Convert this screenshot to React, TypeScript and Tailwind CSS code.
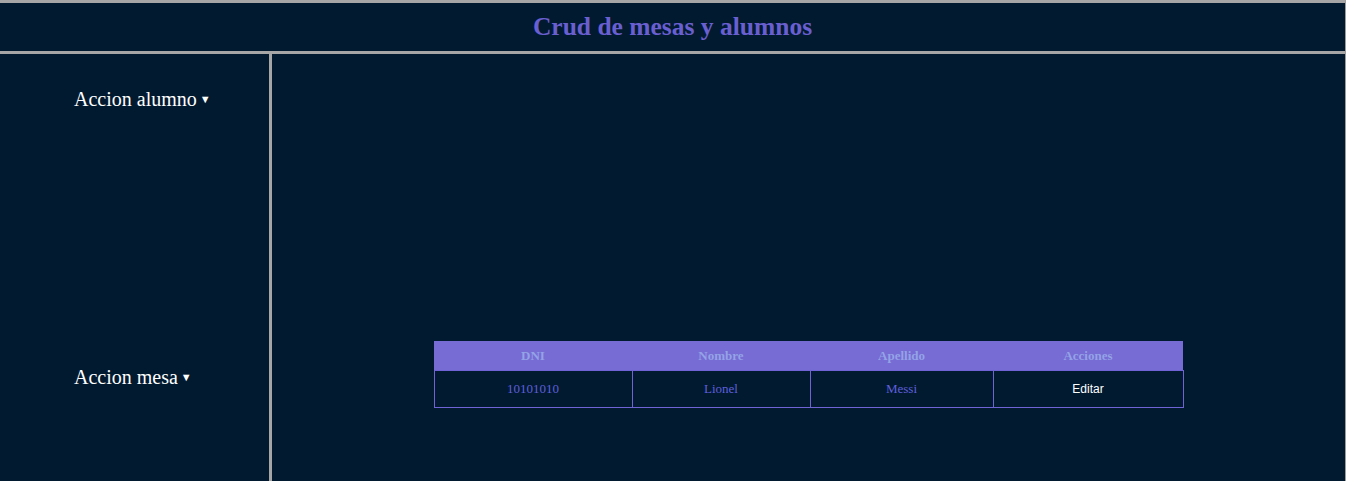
const rows = [{ dni: "10101010", nombre: "Lionel", apellido: "Messi" }];

function Accion({ label }: { label: string }) {
  return (
    <div className="flex items-center text-[20px] text-white">
      <span>{label}</span>
      <span className="ml-[3px] text-[11px]">▼</span>
    </div>
  );
}

export default function App() {
  return (
    <div
      className="flex h-[481px] flex-col border-r border-[#9c9c9c] bg-[#011a30]"
      style={{ fontFamily: '"Liberation Serif", "Times New Roman", serif' }}
    >
      <header className="flex h-[54px] shrink-0 items-center justify-center border-t-[3px] border-b-[3px] border-[#a6a6a6]">
        <h1 className="text-[25.5px] font-bold text-[#6a5fd0]">Crud de mesas y alumnos</h1>
      </header>
      <div className="flex flex-1">
        <aside className="flex w-[272px] shrink-0 flex-col border-r-[3px] border-[#a6a6a6] pl-[74px] pt-[30px]">
          <Accion label="Accion alumno" />
          <div className="mt-[248px]">
            <Accion label="Accion mesa" />
          </div>
        </aside>
        <main className="flex flex-1 justify-center pt-[287px]">
          <table className="h-fit w-[750px] border-collapse text-[13px]">
            <thead>
              <tr className="h-[29px] bg-[#776bd4] text-[#93a3e6]">
                <th className="w-[198px] font-bold">DNI</th>
                <th className="w-[178px] font-bold">Nombre</th>
                <th className="w-[183px] font-bold">Apellido</th>
                <th className="font-bold">Acciones</th>
              </tr>
            </thead>
            <tbody>
              {rows.map((r) => (
                <tr key={r.dni} className="h-[37px] text-center text-[#5f5fdc]">
                  <td className="border border-[#6f63d6]">{r.dni}</td>
                  <td className="border border-[#6f63d6]">{r.nombre}</td>
                  <td className="border border-[#6f63d6]">{r.apellido}</td>
                  <td
                    className="border border-[#6f63d6] text-[12px] text-white"
                    style={{ fontFamily: '"Liberation Sans", Arial, sans-serif' }}
                  >
                    Editar
                  </td>
                </tr>
              ))}
            </tbody>
          </table>
        </main>
      </div>
    </div>
  );
}
